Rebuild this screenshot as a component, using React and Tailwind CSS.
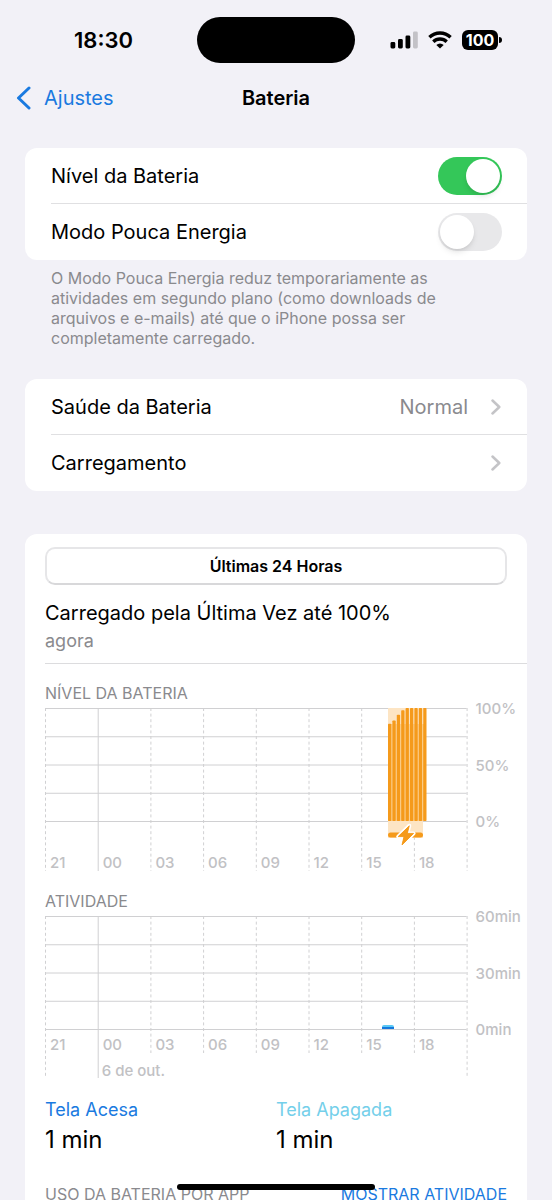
import { useState } from "react";

const HOURS = ["21", "00", "03", "06", "09", "12", "15", "18"];
const LEVELS = [86, 89, 94, 98, 100, 100, 100, 100, 100];

const COL = 52.7;
const ROW = 28.25;
const PLOT_W = COL * 8;
const PLOT_H = ROW * 4;

function Chevron() {
  return (
    <svg className="w-3 h-4 shrink-0" viewBox="0 0 12 16" fill="none" aria-hidden="true">
      <path d="M2.5 1.5 9.3 8 2.5 14.5" stroke="#c4c4c7" strokeWidth="2.5" strokeLinecap="round" strokeLinejoin="round" />
    </svg>
  );
}

function StatusBar() {
  return (
    <div className="grid grid-cols-[1fr_158px_1fr] items-center px-[50px] pt-[17px]">
      <div className="pl-6 text-[22px] leading-8 font-semibold">18:30</div>
      <div className="h-[46px] rounded-full bg-black" />
      <div className="flex items-center justify-end gap-[10px]">
        <svg className="w-7 h-5" viewBox="0 0 28 20" aria-hidden="true">
          <rect x="0.5" y="12" width="4.8" height="6.5" rx="1.4" />
          <rect x="8" y="9" width="4.8" height="9.5" rx="1.4" />
          <rect x="15.5" y="5.5" width="4.8" height="13" rx="1.4" />
          <rect x="23" y="1.5" width="4.8" height="17" rx="1.4" fill="#c3c2c7" />
        </svg>
        <svg className="w-6 h-5" viewBox="0 0 24 20" fill="none" stroke="#000" strokeWidth="3.3" aria-hidden="true">
          <path d="M1.4 7.3a15.2 15.2 0 0 1 21.2 0" />
          <path d="M5.3 11.7a9.6 9.6 0 0 1 13.4 0" />
          <path d="M12 18.6 8.3 15a5.3 5.3 0 0 1 7.4 0Z" fill="#000" stroke="none" />
        </svg>
        <div className="flex items-center gap-px">
          <div className="w-9 h-5 rounded-md bg-black text-white text-base leading-5 font-bold text-center">100</div>
          <div className="w-[3px] h-[6px] rounded-r-full bg-black" />
        </div>
      </div>
    </div>
  );
}

function ToggleRow({ id, label, checked, onChange }) {
  return (
    <div className="flex items-center justify-between h-14 pr-[25px]">
      <label htmlFor={id}>{label}</label>
      <input
        id={id}
        type="checkbox"
        role="switch"
        checked={checked}
        onChange={(e) => onChange(e.target.checked)}
        className="appearance-none w-16 h-[38px] p-[2px] rounded-full bg-[#e8e8ea] checked:bg-[#34c759] before:block before:size-[34px] before:rounded-full before:bg-white before:shadow-md checked:before:translate-x-[26px] before:transition-transform"
      />
    </div>
  );
}

function LinkRow({ label, value }) {
  return (
    <a href="#" className="flex items-center h-14 pr-[25px]">
      <span className="flex-1">{label}</span>
      {value && <span className="mr-[22px] text-[#8a8a8e]">{value}</span>}
      <Chevron />
    </a>
  );
}

function Grid({ bottom, dashedBottom, scale, label, children }) {
  return (
    <svg className="block w-full h-auto overflow-visible" viewBox={`0 0 482 ${bottom}`} role="img" aria-label={label}>
      <g stroke="#d0d0d2" strokeWidth="1">
        {[0, 1, 2, 3, 4].map((i) => (
          <line key={i} x1="0" x2={PLOT_W} y1={i * ROW + 0.5} y2={i * ROW + 0.5} />
        ))}
        {[...HOURS, ""].map((h, i) => (
          <line
            key={i}
            x1={i * COL + 0.5}
            x2={i * COL + 0.5}
            y1="0"
            y2={i === 0 || i === 1 || i === 8 ? bottom : dashedBottom}
            strokeDasharray={h === "00" ? undefined : "3 2.6"}
          />
        ))}
      </g>
      {children}
      <g fill="#c1c1c4" fontSize="15" fontWeight="500">
        {HOURS.map((h, i) => (
          <text key={h} x={i * COL + 5} y={dashedBottom - 3}>{h}</text>
        ))}
        {scale.map((s, i) => (
          <text key={s} x={PLOT_W + 9} y={i * ROW * 2 + 6}>{s}</text>
        ))}
      </g>
    </svg>
  );
}

function LevelChart() {
  return (
    <Grid label="Nível da Bateria" bottom={163} dashedBottom={163} scale={["100%", "50%", "0%"]}>
      <rect x="343" y="0" width="35" height="130" fill="#fde5c4" />
      <rect x="343" y="16" width="38" height={PLOT_H - 16} fill="#fbd193" />
      {LEVELS.map((level, i) => (
        <rect
          key={i}
          x={343 + i * 4.4}
          y={PLOT_H * (1 - level / 100)}
          width="3.3"
          height={(PLOT_H * level) / 100}
          rx="0.8"
          fill="#f59a1b"
        />
      ))}
      <rect x="343" y="124.5" width="35" height="5" rx="2.5" fill="#f59a1b" />
      <path
        d="M364.3 117.8 353.2 128.6H359L357 137 368.6 125.4H362.3Z"
        fill="#f59a1b"
        stroke="#fff"
        strokeWidth="4"
        strokeLinejoin="round"
        paintOrder="stroke"
      />
      <path
        d="M364.3 117.8 353.2 128.6H359L357 137 368.6 125.4H362.3Z"
        fill="#f59a1b"
        stroke="#f59a1b"
        strokeWidth="0.8"
        strokeLinejoin="round"
      />
    </Grid>
  );
}

function ActivityChart() {
  return (
    <Grid label="Atividade" bottom={162} dashedBottom={137} scale={["60min", "30min", "0min"]}>
      <path d="M337 113v-2a2 2 0 0 1 2-2h8a2 2 0 0 1 2 2v2Z" fill="#5ac8f5" />
      <rect x="337" y="111" width="12" height="2" fill="#1479dd" />
      <text x={COL + 4} y="160" fill="#c1c1c4" fontSize="15" fontWeight="500">6 de out.</text>
    </Grid>
  );
}

export default function App() {
  const [showLevel, setShowLevel] = useState(true);
  const [lowPower, setLowPower] = useState(false);

  return (
    <div className="relative flex flex-col h-screen overflow-hidden bg-[#f2f1f7] text-black font-[Inter,'Liberation_Sans',sans-serif]">
      <StatusBar />

      <nav className="grid grid-cols-3 items-center h-[70px] px-4 text-xl">
        <a href="#" className="flex items-center gap-3 text-[#1a7ae0]">
          <svg className="w-4 h-6" viewBox="0 0 16 24" fill="none" aria-hidden="true">
            <path d="M13 2 2.5 12 13 22" stroke="currentColor" strokeWidth="3" strokeLinecap="round" strokeLinejoin="round" />
          </svg>
          Ajustes
        </a>
        <h1 className="font-semibold text-center">Bateria</h1>
      </nav>

      <main className="flex-1 overflow-y-auto px-[25px] text-xl [scrollbar-width:none]">
        <section className="mt-[15px] pl-[26px] rounded-xl bg-white divide-y divide-[#e0e0e2]">
          <ToggleRow id="show-level" label="Nível da Bateria" checked={showLevel} onChange={setShowLevel} />
          <ToggleRow id="low-power" label="Modo Pouca Energia" checked={lowPower} onChange={setLowPower} />
        </section>
        <p className="mt-2 px-[26px] pr-16 text-base leading-5 text-[#8a8a8e]">
          O Modo Pouca Energia reduz temporariamente as atividades em segundo plano (como downloads de arquivos e e-mails) até que o iPhone possa ser completamente carregado.
        </p>

        <section className="mt-[31px] pl-[26px] rounded-xl bg-white divide-y divide-[#e0e0e2]">
          <LinkRow label="Saúde da Bateria" value="Normal" />
          <LinkRow label="Carregamento" />
        </section>

        <section className="mt-[43px] pt-[13px] pl-5 rounded-t-xl bg-white">
          <div className="pr-5">
            <button type="button" className="block w-full h-[38px] rounded-[10px] border-2 border-[#e6e6e8] border-b-[#d8d8da] bg-white text-base font-semibold">
              Últimas 24 Horas
            </button>
          </div>

          <div className="pt-[14px] pb-2 border-b border-[#dcdcde]">
            <h2 className="leading-7">Carregado pela Última Vez até 100%</h2>
            <p className="text-lg leading-7 text-[#8a8a8e]">agora</p>
          </div>

          <h3 className="pt-[19px] pb-[5px] text-base leading-5 text-[#8a8a8e]">NÍVEL DA BATERIA</h3>
          <LevelChart />
          <h3 className="pt-5 pb-[5px] text-base leading-5 text-[#8a8a8e]">ATIVIDADE</h3>
          <ActivityChart />

          <dl className="grid grid-cols-2 pt-[18px] pr-5">
            <div>
              <dt className="text-lg leading-7 text-[#1a7ae0]">Tela Acesa</dt>
              <dd className="text-2xl leading-8">1 min</dd>
            </div>
            <div>
              <dt className="text-lg leading-7 text-[#74cfea]">Tela Apagada</dt>
              <dd className="text-2xl leading-8">1 min</dd>
            </div>
          </dl>

          <div className="flex justify-between pt-7 pb-10 pr-5 text-base leading-5">
            <h3 className="text-[#8a8a8e]">USO DA BATERIA POR APP</h3>
            <button type="button" className="text-[#1a7ae0]">MOSTRAR ATIVIDADE</button>
          </div>
        </section>
      </main>

      <div className="absolute inset-x-0 bottom-[10px] mx-auto w-[198px] h-[6px] rounded-full bg-black" />
    </div>
  );
}
